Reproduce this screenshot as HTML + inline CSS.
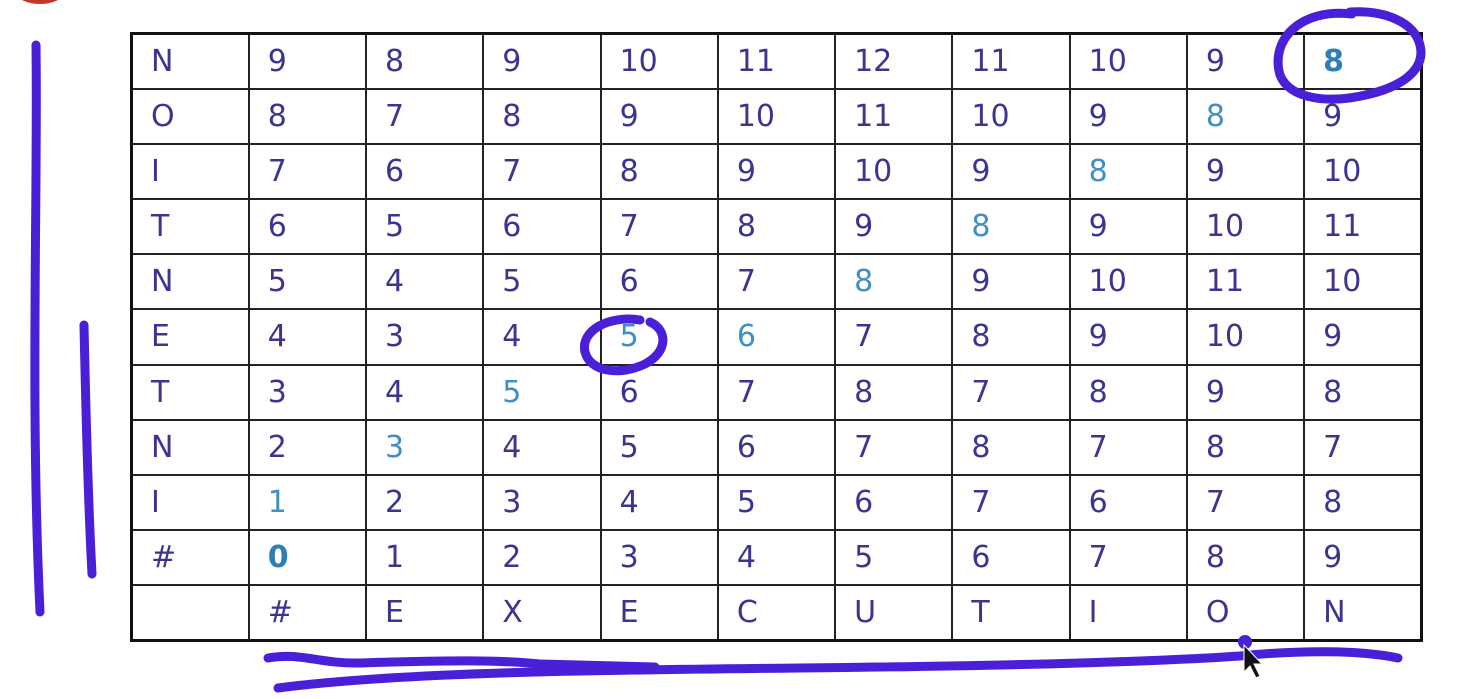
<!DOCTYPE html>
<html><head><meta charset="utf-8"><style>
html,body{margin:0;padding:0;background:#fff;width:1478px;height:699px;overflow:hidden;position:relative}
table{position:absolute;left:130px;top:32px;border-collapse:collapse;table-layout:fixed;width:1293px;height:610px;border:3px solid #111}
td{border:2px solid #222;width:117px;height:55px;padding:0 0 0 18px;font-family:"DejaVu Sans","Liberation Sans",sans-serif;font-size:30px;color:#3c3590;vertical-align:middle;box-sizing:border-box}
td.t{color:#3f8fc4}
td.b{color:#2d7fb5;font-weight:bold}
svg{position:absolute;left:0;top:0}
</style></head><body>
<table>
<tr><td>N</td><td>9</td><td>8</td><td>9</td><td>10</td><td>11</td><td>12</td><td>11</td><td>10</td><td>9</td><td class="b">8</td></tr>
<tr><td>O</td><td>8</td><td>7</td><td>8</td><td>9</td><td>10</td><td>11</td><td>10</td><td>9</td><td class="t">8</td><td>9</td></tr>
<tr><td>I</td><td>7</td><td>6</td><td>7</td><td>8</td><td>9</td><td>10</td><td>9</td><td class="t">8</td><td>9</td><td>10</td></tr>
<tr><td>T</td><td>6</td><td>5</td><td>6</td><td>7</td><td>8</td><td>9</td><td class="t">8</td><td>9</td><td>10</td><td>11</td></tr>
<tr><td>N</td><td>5</td><td>4</td><td>5</td><td>6</td><td>7</td><td class="t">8</td><td>9</td><td>10</td><td>11</td><td>10</td></tr>
<tr><td>E</td><td>4</td><td>3</td><td>4</td><td class="t">5</td><td class="t">6</td><td>7</td><td>8</td><td>9</td><td>10</td><td>9</td></tr>
<tr><td>T</td><td>3</td><td>4</td><td class="t">5</td><td>6</td><td>7</td><td>8</td><td>7</td><td>8</td><td>9</td><td>8</td></tr>
<tr><td>N</td><td>2</td><td class="t">3</td><td>4</td><td>5</td><td>6</td><td>7</td><td>8</td><td>7</td><td>8</td><td>7</td></tr>
<tr><td>I</td><td class="t">1</td><td>2</td><td>3</td><td>4</td><td>5</td><td>6</td><td>7</td><td>6</td><td>7</td><td>8</td></tr>
<tr><td>#</td><td class="b">0</td><td>1</td><td>2</td><td>3</td><td>4</td><td>5</td><td>6</td><td>7</td><td>8</td><td>9</td></tr>
<tr><td></td><td>#</td><td>E</td><td>X</td><td>E</td><td>C</td><td>U</td><td>T</td><td>I</td><td>O</td><td>N</td></tr>
</table>
<svg width="1478" height="699" viewBox="0 0 1478 699">
<ellipse cx="40" cy="-8" rx="24" ry="12" fill="#c0392b"/>
<g fill="none" stroke="#4a1fd8" stroke-width="9" stroke-linecap="round">
<path d="M36 45 C38 200 30 400 40 612"/>
<path d="M84 325 C86 420 88 500 92 574"/>
<path d="M268 658 C300 652 320 664 360 663 C450 660 500 660 540 664 L655 667"/>
<path d="M278 688 C400 672 600 670 800 668 C1000 666 1150 662 1240 656 C1300 650 1360 650 1398 658"/>
<path d="M1352 14 C1300 8 1270 40 1280 75 C1290 100 1330 104 1370 94 C1410 84 1425 65 1420 45 C1414 22 1385 10 1350 12"/>
<path d="M640 320 C610 315 580 330 585 352 C590 372 620 376 645 364 C668 352 668 330 650 322"/>
</g>
<circle cx="1245" cy="642" r="7" fill="#4a1fd8"/>
<path d="M1244 645 L1244 672 L1250 666 L1256 678 L1260 676 L1254 664 L1262 664 Z" fill="#111" stroke="#fff" stroke-width="1"/>
</svg>
</body></html>
